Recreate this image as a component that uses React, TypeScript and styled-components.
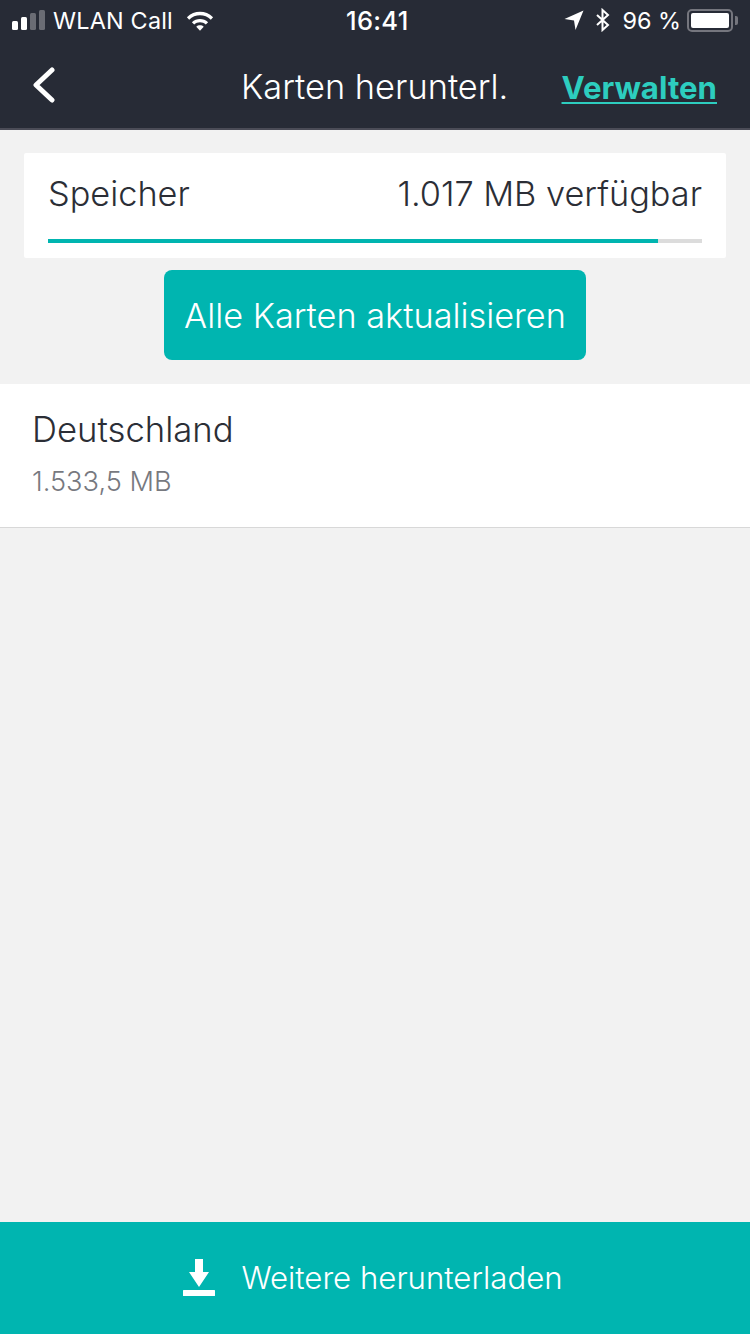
import styled, { createGlobalStyle } from 'styled-components';

const teal = '#00b5b0';

const GlobalStyle = createGlobalStyle`
  html, body {
    margin: 0;
    padding: 0;
    background: #f2f2f2;
  }
  * {
    box-sizing: border-box;
  }
`;

const Page = styled.div`
  width: 750px;
  height: 1334px;
  display: flex;
  flex-direction: column;
  background: #f2f2f2;
  font-family: Inter, "Liberation Sans", sans-serif;
  overflow: hidden;
`;

const Header = styled.header`
  background: #272b36;
  height: 130px;
  border-bottom: 2px solid #4b4c57;
  flex-shrink: 0;
`;

const StatusBar = styled.div`
  height: 40px;
  padding: 0 17px 0 12px;
  display: flex;
  align-items: center;
  justify-content: space-between;
  color: #fff;
  font-size: 23.4px;
  position: relative;
`;

const StatusGroup = styled.div`
  display: flex;
  align-items: center;
  gap: 11px;
`;

const Clock = styled.span`
  position: absolute;
  left: 346px;
  top: 5px;
  font-weight: 500;
  font-size: 25.5px;
  letter-spacing: 0.3px;
`;

const Signal = styled.div`
  display: flex;
  align-items: flex-end;
  gap: 3px;
  height: 20px;
  margin-right: -3px;
`;

const SignalBar = styled.span<{ $h: number; $on?: boolean }>`
  width: 6px;
  height: ${p => p.$h}px;
  border-radius: 1.5px;
  background: ${p => (p.$on ? '#fff' : '#6a6c74')};
`;

const CarrierLabel = styled.span`
  font-weight: 400;
  letter-spacing: 0.2px;
  margin-right: 2px;
`;

const Battery = styled.div`
  width: 46px;
  height: 23px;
  border: 2px solid #75767e;
  border-radius: 5px;
  padding: 2px;
  margin-left: -5px;
  position: relative;

  &::before {
    content: '';
    display: block;
    height: 100%;
    background: #fff;
    border-radius: 2px;
  }

  &::after {
    content: '';
    position: absolute;
    right: -7px;
    top: 5px;
    width: 3px;
    height: 9px;
    border-radius: 0 2px 2px 0;
    background: #75767e;
  }
`;

const BackIcon = styled.svg`
  margin: 2px 0 0 -2px;
`;

const NavBar = styled.nav`
  height: 88px;
  padding: 0 33px 0 34px;
  display: flex;
  align-items: center;
  justify-content: space-between;
  position: relative;
`;

const NavTitle = styled.h1`
  position: absolute;
  left: 241px;
  top: 25px;
  margin: 0;
  font-size: 34.4px;
  font-weight: 300;
  color: #fff;
  line-height: 44px;
  letter-spacing: 0;
`;

const ManageLink = styled.a`
  color: #2dcdbf;
  font-size: 31.2px;
  font-weight: 700;
  margin-top: 7px;
  text-decoration: underline;
  text-underline-offset: 3px;
  text-decoration-thickness: 2px;
`;

const Content = styled.main`
  flex: 1;
  padding-top: 23px;
  display: flex;
  flex-direction: column;
  align-items: center;
`;

const StorageCard = styled.section`
  width: 702px;
  height: 105px;
  background: #fff;
  border-radius: 2px;
  padding: 0 24px;
  display: flex;
  flex-direction: column;
`;

const StorageRow = styled.div`
  height: 86px;
  padding-bottom: 5px;
  display: flex;
  align-items: center;
  justify-content: space-between;
  font-size: 34.3px;
  font-weight: 300;
  color: #2b2e36;
`;

const ProgressTrack = styled.div`
  height: 4px;
  background: #dcdcdc;
`;

const ProgressFill = styled.div`
  height: 100%;
  background: ${teal};
`;

const UpdateButton = styled.button`
  width: 422px;
  height: 90px;
  margin-top: 12px;
  border: 0;
  border-radius: 8px;
  background: ${teal};
  color: #fff;
  font-family: inherit;
  font-size: 34.3px;
  font-weight: 300;
`;

const MapList = styled.ul`
  list-style: none;
  align-self: stretch;
  margin: 24px 0 0;
  padding: 0;
`;

const MapItem = styled.li`
  height: 144px;
  padding: 23px 32px 0;
  background: #fff;
  border-bottom: 1px solid #d8d8d8;
`;

const MapName = styled.div`
  font-size: 34.7px;
  font-weight: 300;
  line-height: 44px;
  color: #2b2e36;
`;

const MapSize = styled.div`
  margin-top: 13px;
  font-size: 27.2px;
  font-weight: 300;
  line-height: 36px;
  color: #77797f;
`;

const DownloadBar = styled.button`
  height: 112px;
  flex-shrink: 0;
  border: 0;
  padding: 0 4px 0 0;
  background: ${teal};
  color: #fff;
  font-family: inherit;
  font-size: 31.2px;
  font-weight: 300;
  display: flex;
  align-items: center;
  justify-content: center;
  gap: 26px;
`;

const App = () => {
  return (
    <Page>
      <GlobalStyle />
      <Header>
        <StatusBar>
          <StatusGroup>
            <Signal>
              <SignalBar $h={9} $on />
              <SignalBar $h={13} $on />
              <SignalBar $h={17} />
              <SignalBar $h={20} />
            </Signal>
            <CarrierLabel>WLAN Call</CarrierLabel>
            <svg width="28" height="21" viewBox="0 0 30 22">
              <path d="M1 7.500C8.800-.2 21.200-.2 29 7.500l-2.400 2.600C20.200 3.900 9.800 3.900 3.400 10.100z" fill="#fff" />
              <path d="M6.300 12.800c4.800-4.700 12.600-4.700 17.400 0l-2.500 2.600c-3.400-3.300-9-3.300-12.400 0z" fill="#fff" />
              <path d="M11 17.700c2.200-2.100 5.800-2.100 8 0l-4 4.300z" fill="#fff" />
            </svg>
          </StatusGroup>
          <Clock>16:41</Clock>
          <StatusGroup>
            <svg width="20" height="22" viewBox="0 0 20 22">
              <path d="M19.500 1.500 L0.500 10 L10 11.500 L11.500 21 Z" fill="#fff" />
            </svg>
            <svg width="16" height="24" viewBox="0 0 16 24">
              <path d="M2 7l11 10-5.500 5V2L13 7 2 17" fill="none" stroke="#fff" strokeWidth="2" />
            </svg>
            <span>96 %</span>
            <Battery />
          </StatusGroup>
        </StatusBar>
        <NavBar>
          <BackIcon width="24" height="36" viewBox="0 0 24 36">
            <path d="M20 3 L4 18 L20 33" fill="none" stroke="#fff" strokeWidth="5" strokeLinecap="round" strokeLinejoin="round" />
          </BackIcon>
          <NavTitle>Karten herunterl.</NavTitle>
          <ManageLink>Verwalten</ManageLink>
        </NavBar>
      </Header>
      <Content>
        <StorageCard>
          <StorageRow>
            <span>Speicher</span>
            <span>1.017 MB verfügbar</span>
          </StorageRow>
          <ProgressTrack>
            <ProgressFill style={{ width: `${(610 / 654) * 100}%` }} />
          </ProgressTrack>
        </StorageCard>
        <UpdateButton>Alle Karten aktualisieren</UpdateButton>
        <MapList>
          <MapItem>
            <MapName>Deutschland</MapName>
            <MapSize>1.533,5 MB</MapSize>
          </MapItem>
        </MapList>
      </Content>
      <DownloadBar>
        <svg width="32" height="40" viewBox="0 0 32 40">
          <path d="M12 1h8v13h6L16 29 6 14h6z" fill="#fff" />
          <rect y="32" width="32" height="6" rx="0.5" fill="#fff" />
        </svg>
        <span>Weitere herunterladen</span>
      </DownloadBar>
    </Page>
  );
};

export default App;
